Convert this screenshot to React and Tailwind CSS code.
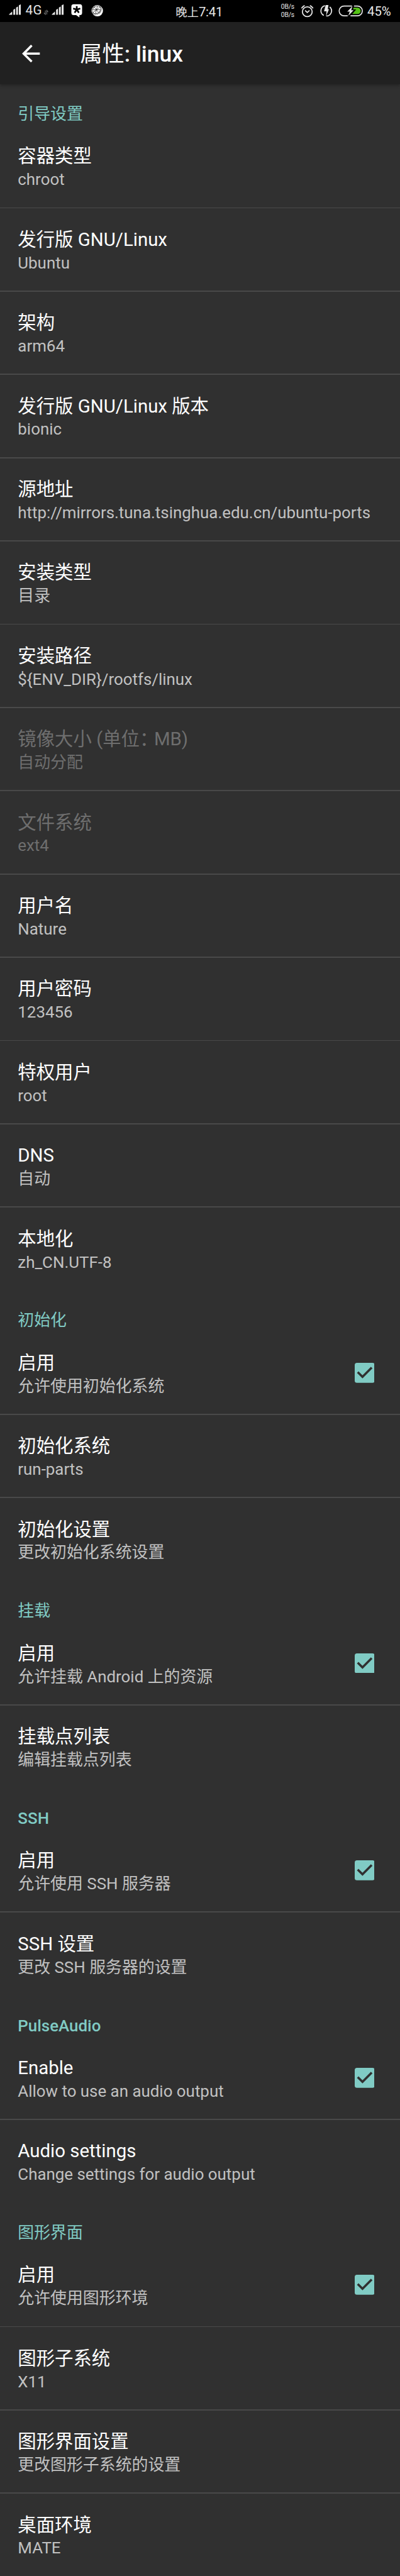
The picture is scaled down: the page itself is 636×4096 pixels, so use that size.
import React from "react";

const FONT = "font-['Roboto','Noto_Sans_CJK_SC',sans-serif]";

const sections = [
  {
    title: "引导设置",
    items: [
      { title: "容器类型", sub: "chroot" },
      { title: "发行版 GNU/Linux", sub: "Ubuntu" },
      { title: "架构", sub: "arm64" },
      { title: "发行版 GNU/Linux 版本", sub: "bionic" },
      { title: "源地址", sub: "http://mirrors.tuna.tsinghua.edu.cn/ubuntu-ports" },
      { title: "安装类型", sub: "目录" },
      { title: "安装路径", sub: "${ENV_DIR}/rootfs/linux" },
      {
        title: (
          <>
            镜像大小 (单位<span className="tracking-[-6.5px]">：</span>MB)
          </>
        ),
        sub: "自动分配",
        disabled: true,
      },
      { title: "文件系统", sub: "ext4", disabled: true },
      { title: "用户名", sub: "Nature" },
      { title: "用户密码", sub: "123456" },
      { title: "特权用户", sub: "root" },
      { title: "DNS", sub: "自动" },
      { title: "本地化", sub: "zh_CN.UTF-8" },
    ],
  },
  {
    title: "初始化",
    items: [
      { title: "启用", sub: "允许使用初始化系统", checked: true },
      { title: "初始化系统", sub: "run-parts" },
      { title: "初始化设置", sub: "更改初始化系统设置" },
    ],
  },
  {
    title: "挂载",
    items: [
      { title: "启用", sub: "允许挂载 Android 上的资源", checked: true },
      { title: "挂载点列表", sub: "编辑挂载点列表" },
    ],
  },
  {
    title: "SSH",
    latin: true,
    items: [
      { title: "启用", sub: "允许使用 SSH 服务器", checked: true },
      { title: "SSH 设置", sub: "更改 SSH 服务器的设置" },
    ],
  },
  {
    title: "PulseAudio",
    latin: true,
    items: [
      { title: "Enable", sub: "Allow to use an audio output", checked: true },
      { title: "Audio settings", sub: "Change settings for audio output" },
    ],
  },
  {
    title: "图形界面",
    items: [
      { title: "启用", sub: "允许使用图形环境", checked: true },
      { title: "图形子系统", sub: "X11" },
      { title: "图形界面设置", sub: "更改图形子系统的设置" },
      { title: "桌面环境", sub: "MATE" },
    ],
  },
];

function SignalBars({ className, viewBox }) {
  return (
    <svg viewBox={viewBox} className={className} fill="#e6e6e6">
      <path d="M24.5 40V38.6L33 31V40ZM36 40V26.5L41 23.5V40ZM43.6 40V20.5L48.6 17.5V40ZM51 40V14.5L55.5 12H56.2V40Z" />
    </svg>
  );
}

function StatusBar() {
  return (
    <div className="flex h-[35.31px] shrink-0 items-start bg-black text-[#e6e6e6]">
      <SignalBars viewBox="0 0 69 60" className="h-[35.31px] w-[40.6px] shrink-0" />
      <span className="w-[28.9px] shrink-0 text-[20.6px] leading-[32.4px] tracking-[0.3px]">4G</span>
      <svg viewBox="118 0 16 60" className="h-[35.31px] w-[9.4px] shrink-0" fill="none" stroke="#777" strokeWidth="1.8">
        <path d="M123.3 28v11l-4-4.5M127.2 39V28l3.6 4.5" />
      </svg>
      <SignalBars viewBox="18.7 0 48 60" className="h-[35.31px] w-[28.3px] shrink-0" />
      <svg viewBox="182 0 52 60" className="h-[35.31px] w-[30.6px] shrink-0">
        <path fill="#fff" d="M199 11.5h17a6 6 0 0 1 6 6V35a6 6 0 0 1-6 6h-1.300V47L206 41h-7a6 6 0 0 1-6-6V17.500a6 6 0 0 1 6-6Z" />
        <path stroke="#000" strokeWidth="4.6" d="M207.500 26V16.500M207.500 26l9.600-3M207.500 26l5.800 8.500M207.500 26l-5.800 8.500M207.500 26l-9.600-3" />
      </svg>
      <svg viewBox="234 0 56 60" className="h-[35.31px] w-[33px] shrink-0">
        <circle cx="262.500" cy="29" r="15.200" fill="#fff" />
        <g transform="rotate(-38 260.500 27)">
          <ellipse cx="260.500" cy="27" rx="14.600" ry="11.800" fill="#000" />
          <ellipse cx="260.500" cy="26.300" rx="13.600" ry="10.800" fill="none" stroke="#fff" strokeWidth="1.500" />
          <ellipse cx="260.500" cy="26.300" rx="11.800" ry="9" fill="#fff" />
          <path stroke="#000" strokeWidth="1" d="M249 26.300h23M260.500 17.500v17.600M252.300 20l16.400 12.600M268.700 20l-16.400 12.600" />
        </g>
      </svg>
      <div className="ml-[108.4px] flex w-[80px] shrink-0 items-baseline whitespace-nowrap leading-[38.5px]">
        <span className="text-[18.4px]">晚上</span>
        <span className="text-[20.4px] tracking-[-0.3px]">7:41</span>
      </div>
      <div className="ml-[87.6px] w-[26.5px] shrink-0 pt-[5.3px] text-[10.4px] leading-[12.95px] tracking-[-0.2px]">
        <div>0B/s</div>
        <div>0B/s</div>
      </div>
      <svg viewBox="804 0 52 60" className="h-[35.31px] w-[30.6px] shrink-0" fill="none" stroke="#e6e6e6" strokeWidth="3" strokeLinecap="round" strokeLinejoin="round">
        <circle cx="830.500" cy="31.700" r="13.200" />
        <path d="M825.500 29l5 4.800 5-4.800M815.500 21.500a19 19 0 0 1 6.800-6M845.500 21.500a19 19 0 0 0-6.800-6" />
      </svg>
      <svg viewBox="856 0 52 60" className="h-[35.31px] w-[30.6px] shrink-0">
        <path fill="none" stroke="#e6e6e6" strokeWidth="3" d="M877.500 15.500A14 14 0 0 0 874.500 41.700M890.500 18.700A14 14 0 0 1 881 43.300" />
        <path fill="#e6e6e6" d="M879.500 13.500H887l-1.800 11.500h3.200L880.600 43.500l1.200-12.700h-6.800Z" />
      </svg>
      <svg viewBox="908 0 82 60" className="h-[35.31px] w-[48.3px] shrink-0">
        <path fill="none" stroke="#e6e6e6" strokeWidth="2.800" d="M951.500 16.400H930a13 13 0 0 0 0 26.200H940M957 16.400h9.500a13 13 0 0 1 0 26.200H947.500" />
        <path fill="#55c317" d="M956 21h10.500a8.500 8.500 0 0 1 0 17H952.500L963 25.500h-8.500Z" />
        <path fill="#e6e6e6" d="M952.800 16.500 938.800 31.500h6.700L941.500 43 956 27.500h-6.500Z" />
      </svg>
      <span className="ml-[1.2px] text-[20.4px] leading-[36.6px]">45%</span>
    </div>
  );
}

function AppBar() {
  return (
    <header className="flex h-[98.87px] shrink-0 items-center bg-[#212121] pl-[28.3px] text-white shadow-[0_2px_5px_rgba(0,0,0,0.28)]">
      <svg viewBox="0 0 24 24" className="size-[42.4px] shrink-0" fill="#fff">
        <path d="M20 11H7.830l5.590-5.590L12 4l-8 8 8 8 1.410-1.410L7.830 13H20v-2z" />
      </svg>
      <h1 className="ml-[56.5px] pt-[3.5px] text-[35.3px] leading-[42px] font-medium">
        <span className="font-normal">属性</span>: linux
      </h1>
    </header>
  );
}

function CheckBox() {
  return (
    <svg viewBox="3 3 18 18" className="size-[31.8px] shrink-0">
      <rect x="3" y="3" width="18" height="18" rx="2" fill="#80cbc4" />
      <path fill="#303030" d="M10 17l-5-5 1.410-1.410L10 14.170l7.590-7.590L19 8l-9 9z" />
    </svg>
  );
}

function Preference({ item, divider }) {
  return (
    <div className="shrink-0">
      <div className="flex h-[130.65px] items-center justify-between pr-[40.6px] pl-[28.3px]">
        <div className="h-full pt-[30.5px] whitespace-nowrap">
          <div className={`text-[29.4px] leading-[38.85px] ${item.disabled ? "text-[#6e6e6e]" : "text-white"}`}>{item.title}</div>
          <div className={`text-[25.9px] leading-[35.3px] ${item.disabled ? "text-[#6e6e6e]" : "text-[#c1c1c1]"}`}>{item.sub}</div>
        </div>
        {item.checked && <CheckBox />}
      </div>
      <div className={`h-[1.766px] ${divider ? "bg-[#494949]" : ""}`} />
    </div>
  );
}

export default function App() {
  return (
    <div className={`flex h-[4096px] w-[636px] flex-col overflow-hidden bg-[#303030] ${FONT}`}>
      <StatusBar />
      <AppBar />
      {sections.map((section) => (
        <section key={section.title} className="shrink-0">
          <h2
            className={`h-[64.74px] pt-[29.9px] pl-[28.3px] text-[25.9px] leading-[35.3px] text-[#80cbc4] ${section.latin ? "font-medium" : "font-normal"}`}
          >
            {section.title}
          </h2>
          {section.items.map((item, i) => (
            <Preference key={i} item={item} divider={i < section.items.length - 1} />
          ))}
        </section>
      ))}
    </div>
  );
}
